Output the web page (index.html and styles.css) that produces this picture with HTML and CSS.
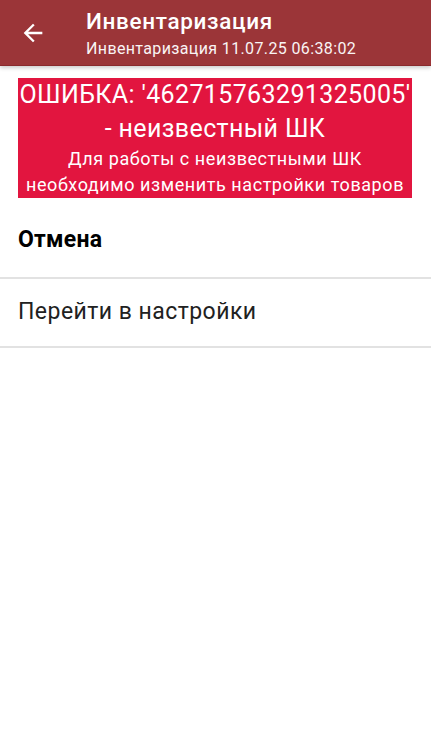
FILE: index.html
```html
<!DOCTYPE html>
<html>
  <head>
    <meta charset="utf-8" />
    <meta name="viewport" content="width=device-width, initial-scale=1" />
    <title>Инвентаризация</title>
    <link rel="stylesheet" href="styles.css">
  </head>
  <body>
    <div class="toolbar">
      <div class="back">
        <svg width="28" height="28" viewBox="0 0 24 24">
          <path d="M20 11H7.83l5.59-5.59L12 4l-8 8 8 8 1.41-1.41L7.83 13H20v-2z" fill="#fff" />
        </svg>
      </div>
      <div class="titles">
        <div class="title">Инвентаризация</div>
        <div class="subtitle">Инвентаризация 11.07.25 06:38:02</div>
      </div>
    </div>

    <div class="content">
      <div class="error">
        <div class="error-main">ОШИБКА: '462715763291325005'<br />- неизвестный ШК</div>
        <div class="error-hint">Для работы с неизвестными ШК<br />необходимо изменить настройки товаров</div>
      </div>

      <div class="menu">
        <div class="menu-item cancel">Отмена</div>
        <div class="menu-item">Перейти в настройки</div>
      </div>
    </div>
  </body>
</html>
```

FILE: styles.css
```css
body {
  margin: 0;
  padding: 0;
  font-family: Roboto, "Noto Sans", sans-serif;
  background: #fff;
  color: #212121;
}

.toolbar {
  display: flex;
  align-items: flex-start;
  height: 65px;
  background: #9b3538;
  border-bottom: 1px solid #8a2a2d;
  box-shadow: 0 2px 4px rgba(0, 0, 0, 0.2);
  color: white;
}

.back {
  display: flex;
  align-items: center;
  justify-content: center;
  width: 66px;
  height: 65px;
}

.titles {
  padding-top: 8px;
  padding-left: 20px;
}

.title {
  font-size: 22.5px;
  font-weight: 500;
  line-height: 26px;
  letter-spacing: 0.03em;
}

.subtitle {
  margin-top: 5px;
  font-size: 16px;
  line-height: 20px;
  letter-spacing: 0.023em;
  opacity: 0.95;
}

.content {
  padding-top: 12px;
}

.error {
  margin: 0 19px 0 18px;
  background: #e2153f;
  color: white;
  text-align: center;
}

.error-main {
  font-size: 25px;
  line-height: 34px;
  letter-spacing: 0.015em;
}

.error-hint {
  font-size: 18px;
  line-height: 26px;
  letter-spacing: 0.032em;
}

.menu {
  margin-top: 10px;
}

.menu-item {
  display: flex;
  align-items: center;
  box-sizing: border-box;
  height: 69px;
  padding: 0 18px 2px;
  font-size: 23px;
  letter-spacing: 0.02em;
  border-bottom: 2px solid #e2e2e2;
}

.menu-item.cancel {
  height: 71px;
  padding-bottom: 6px;
  font-weight: 700;
  color: #000;
  letter-spacing: 0.01em;
}
```
